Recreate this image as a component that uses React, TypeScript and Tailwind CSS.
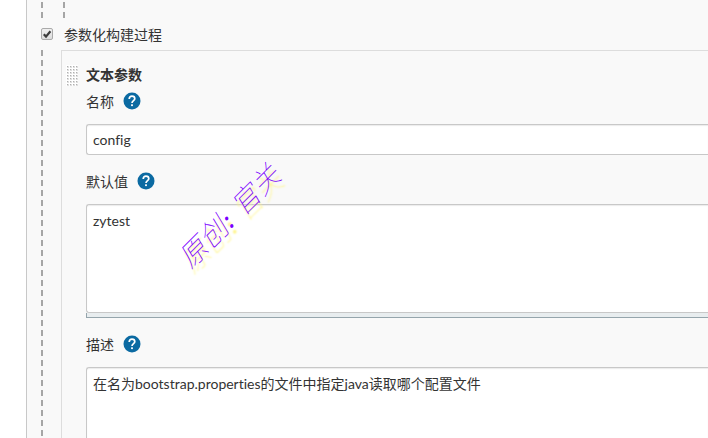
import React, { useId } from 'react';

const CONTROL =
  "block w-full border border-[#c8c8c8] rounded-l-[3px] border-r-0 bg-white px-1.5 font-['Lato','Noto_Sans_CJK_SC',sans-serif] text-[14px] leading-5 text-[#333] shadow-[inset_0_1px_1px_rgba(0,0,0,0.08)] outline-none [font-variant-ligatures:none]";

const DASHES = 'bg-[repeating-linear-gradient(to_bottom,#a6a6a6_0px,#a6a6a6_6px,transparent_6px,transparent_10px)]';

const HelpButton = ({ topic }: { topic: string }) => (
  <button type="button" aria-label={topic} className="block h-[18px] w-[18px]">
    <svg viewBox="0 0 18 18" className="block h-full w-full" aria-hidden="true">
      <circle cx="9" cy="9" r="8.5" fill="#0b6aa2" />
      <path d="M6.2 7C6.2 5.2 7.3 4.2 9 4.2S11.8 5.2 11.8 6.8C11.8 8.6 9 8.8 9 11" fill="none" stroke="#fff" strokeWidth="1.7" />
      <rect x="8.1" y="12.3" width="1.8" height="1.8" fill="#fff" />
    </svg>
  </button>
);

const FieldLabel = ({ id, text }: { id: string; text: string }) => (
  <div className="flex items-center gap-[9px] h-5">
    <label htmlFor={id}>{text}</label>
    <HelpButton topic={text} />
  </div>
);

const DragHandle = () => (
  <svg width="12" height="21" className="shrink-0" aria-hidden="true">
    <defs>
      <pattern id="grip" width="3" height="3" patternUnits="userSpaceOnUse">
        <rect width="3" height="3" fill="#fff" />
        <rect x="1" y="1" width="2" height="2" fill="#dedede" />
        <rect x="1" y="1" width="1" height="1" fill="#b0b0b0" />
      </pattern>
    </defs>
    <rect width="12" height="21" fill="url(#grip)" />
  </svg>
);

const TextParameter = () => {
  const id = useId();

  return (
    <section className="flex-1 min-w-0 min-h-[388px] border-l border-t border-[#ddd] flex gap-2 pl-1 pt-[14px]">
      <DragHandle />
      <div className="flex-1 min-w-0">
        <h3 className="font-bold leading-5">文本参数</h3>
        <div className="mt-[6px]">
          <FieldLabel id={`${id}-name`} text="名称" />
          <input id={`${id}-name`} type="text" defaultValue="config" className={`${CONTROL} mt-[13px] h-[31px]`} />
        </div>
        <div className="mt-4">
          <FieldLabel id={`${id}-value`} text="默认值" />
          <textarea id={`${id}-value`} defaultValue="zytest" className={`${CONTROL} mt-[13px] h-[109px] resize-none pt-1.5`} />
          <div className="h-[5px] bg-[#e8edef] border-b border-l border-[#95a5ac]" />
        </div>
        <div className="mt-4">
          <FieldLabel id={`${id}-description`} text="描述" />
          <textarea
            id={`${id}-description`}
            defaultValue="在名为bootstrap.properties的文件中指定java读取哪个配置文件"
            className={`${CONTROL} mt-[13px] h-[109px] resize-none pt-1.5`}
          />
        </div>
      </div>
    </section>
  );
};

const Watermark = () => (
  <div className="pointer-events-none absolute left-[165px] top-[201px] -rotate-45 whitespace-nowrap font-['DejaVu_Serif','Noto_Sans_CJK_SC',serif] text-[28px] leading-8 font-thin italic text-[#7a00ff] [text-shadow:-2px_6px_2px_#fff480]">
    原创: 官关
  </div>
);

export default function App() {
  return (
    <div className="relative h-screen overflow-hidden bg-white pl-[26px] font-['Open_Sans','Noto_Sans_CJK_SC',sans-serif] text-[14px] text-[#333]">
      <main className="h-full border-l border-[#c8c8c8] bg-[#f9f9f9] pl-[14px]">
        <div className="flex h-[18px] gap-5">
          <div className={`w-[2px] ${DASHES} bg-[position:0_2px]`} />
          <div className={`w-[2px] ${DASHES} bg-[position:0_2px]`} />
        </div>
        <label className="flex h-8 items-center gap-[11px]">
          <span className="relative block h-3 w-3">
            <input
              type="checkbox"
              defaultChecked
              className="peer block h-3 w-3 appearance-none rounded-[2px] border border-[#aaa] bg-linear-to-b from-[#f0f0f0] to-[#dcdcdc]"
            />
            <svg viewBox="0 0 12 12" className="pointer-events-none absolute inset-0 hidden peer-checked:block" aria-hidden="true">
              <path d="M2.8 6.2L5 8.6L9.4 3.2" fill="none" stroke="#3c3c3c" strokeWidth="2.2" />
            </svg>
          </span>
          <span>参数化构建过程</span>
        </label>
        <div className="flex gap-[18px]">
          <div className={`w-[2px] ${DASHES}`} />
          <TextParameter />
        </div>
      </main>
      <Watermark />
    </div>
  );
}
